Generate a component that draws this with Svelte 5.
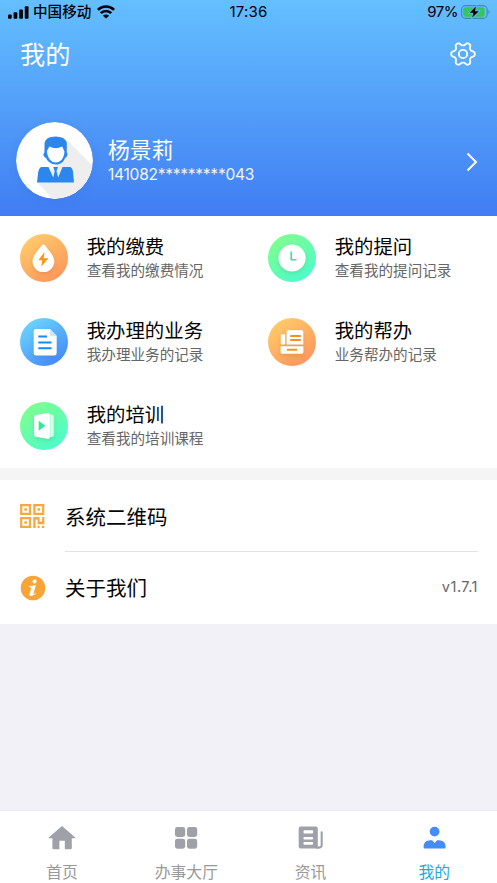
<script>
  const features = [
    { icon: 'pay', title: '我的缴费', sub: '查看我的缴费情况' },
    { icon: 'ask', title: '我的提问', sub: '查看我的提问记录' },
    { icon: 'doc', title: '我办理的业务', sub: '我办理业务的记录' },
    { icon: 'help', title: '我的帮办', sub: '业务帮办的记录' },
    { icon: 'train', title: '我的培训', sub: '查看我的培训课程' }
  ];
  const tabs = [
    { icon: 'home', label: '首页' },
    { icon: 'grid', label: '办事大厅' },
    { icon: 'news', label: '资讯' },
    { icon: 'me', label: '我的', active: true }
  ];
  const gear = Array.from({ length: 72 }, (_, i) => {
    const a = (i * Math.PI) / 36;
    const r = 10.2 + 1.75 * Math.tanh(1.6 * Math.cos(6 * a));
    return `${(13 + r * Math.cos(a)).toFixed(2)},${(13 + r * Math.sin(a)).toFixed(2)}`;
  }).join(' ');
</script>

<div class="screen">
  <header>
    <div class="status">
      <div class="side">
        <svg class="signal" width="21" height="13" viewBox="0 0 21 13"><rect x="0" y="8.5" width="3.7" height="4.3" rx="1"/><rect x="5.6" y="6.3" width="3.7" height="6.5" rx="1"/><rect x="11.2" y="3.5" width="3.7" height="9.3" rx="1"/><rect x="16.8" y="0.3" width="3.7" height="12.5" rx="1"/></svg>
        <span class="carrier">中国移动</span>
        <svg width="18" height="14" viewBox="0 0 18 14" fill="none" stroke="#000" stroke-width="2.6"><path d="M.9 4.9A11.4 11.4 0 0 1 17.1 4.9M3.8 8.2A7.2 7.2 0 0 1 14.2 8.2"/><path d="M9 13.6L5.9 10.7A4.4 4.4 0 0 1 12.1 10.7Z" fill="#000" stroke="none"/></svg>
      </div>
      <time>17:36</time>
      <div class="side right">
        <span>97%</span>
        <svg width="30" height="14" viewBox="0 0 30 14"><rect x=".6" y=".6" width="25.6" height="12.8" rx="4" fill="none" stroke="#4488b5" stroke-width="1.1"/><rect x="2.2" y="2.2" width="21.4" height="9.6" rx="2.5" fill="#34c759"/><path d="M27.5 4.6q2.1 2.3 0 4.8z" fill="#4488b5"/><path d="M14.9 1.6L8.7 7.8H12.4L11.3 12.6L17.7 6.3H13.9z" fill="#000" stroke="#5bb5fa" stroke-width="2" paint-order="stroke"/></svg>
      </div>
    </div>
    <div class="titlebar">
      <h1>我的</h1>
      <svg width="26" height="26" viewBox="0 0 26 26" fill="none" stroke="#fff" stroke-width="1.8" stroke-linejoin="round"><polygon points={gear}/><circle cx="13" cy="13" r="4.2"/></svg>
    </div>
    <div class="profile">
      <svg class="avatar" width="77" height="77" viewBox="0 0 77 77">
        <defs><clipPath id="face"><circle cx="38.5" cy="38.5" r="38.5"/></clipPath></defs>
        <circle cx="38.5" cy="38.5" r="38.5" fill="#fff"/>
        <path clip-path="url(#face)" d="M51 18L84 51V84H43L21 60L40 44Z" fill="#eee"/>
        <path fill="#2b86ee" d="M28.6 20.5Q30 14.5 39.5 14.5T50.8 20.5V30.5C52.6 32 50.6 35.5 49 36.2C47.5 40 44.5 42.5 39.8 42.5S31.5 39.5 30 36C27.5 35 26.6 32 28.4 30.5Z"/>
        <path fill="#fff" d="M33.5 24.5Q39.5 28 46.2 24.5L48.5 29.5C48 36.5 44.5 40.5 39.8 40.5S31.5 36 30.8 29Z"/>
        <path fill="#2b86ee" d="M25 45H32.5L37.2 55.5L38.7 49L37.2 45H42L40.5 49L42.2 55.5L46.5 45H54Q56.4 45.5 57 50L58 60.5H21L22.2 50Q23 46 25 45Z"/>
      </svg>
      <div class="person"><b>杨景莉</b><span>141082*********043</span></div>
      <svg class="chevron" width="12" height="20" viewBox="0 0 12 20" fill="none" stroke="#fff" stroke-width="2"><path d="M1.5 1.5L10 10L1.5 18.5"/></svg>
    </div>
  </header>

  <section class="features">
    {#each features as f}
      <div class="feature">
        <span class="disc {f.icon}">
          <svg width="48" height="48" viewBox="0 0 48 48">
            {#if f.icon === 'pay'}
              <path fill="#fff" d="M21.9 11.3Q23.5 9.5 24.9 11.3C28.5 16 34.3 22 34.3 27.2A10.9 10.9 0 0 1 12.5 27.2C12.5 22 18.3 16 21.9 11.3Z"/><path fill="#ff9417" d="M24.5 18L18.3 26.3H22.2L21.3 32.8L28.3 24.2H23.8Z"/>
            {:else if f.icon === 'ask'}
              <circle cx="24" cy="24" r="13.6" fill="#fff"/><path d="M23.2 17.5V25.8H28.3" fill="none" stroke="#2cec9c" stroke-width="1.6"/>
            {:else if f.icon === 'doc'}
              <path fill="#fff" d="M16 11H30L36.7 18V35Q36.7 37.5 34.3 37.5H16.2Q13.7 37.5 13.7 35V13.4Q13.7 11 16 11Z"/><path fill="#cfe4ff" d="M30 11L36.7 18H31.5Q30 18 30 16.5Z"/><path d="M18.3 18.5H27M18.3 24.5H31.5M18.3 30.3H31.5" stroke="#1788ff" stroke-width="2"/>
            {:else if f.icon === 'help'}
              <g fill="#fff"><rect x="12.8" y="16.2" width="4.4" height="10.3" rx="1.3"/><path d="M20.3 12.3H33.8Q35.3 12.3 35.3 13.8V26.5H18.6V14Q18.6 12.3 20.3 12.3ZM12.6 28.3H35.4V34Q35.4 35.7 33.7 35.7H14.3Q12.6 35.7 12.6 34Z"/></g><path d="M22.2 18H32.8M22.2 22H32.8M19 31.7H29" stroke="#fb9218" stroke-width="1.9"/>
            {:else}
              <path fill="#a8ffd8" d="M27 12.5H32Q34.2 12.5 34.2 15V32.5Q34.2 35 32 35H27Z"/><path fill="#fff" d="M15.7 13.1L27.4 11Q29.8 10.6 29.8 12.9V35Q29.8 37.3 27.4 36.8L15.7 34.7Q14 34.4 14 32.7V15Q14 13.4 15.7 13.1Z"/><path fill="#fff" d="M30.8 12.8H32Q32.5 13 32.5 15V32.8Q32.5 34.6 30.8 34.8Z"/><path fill="#29ed98" d="M18.7 18.8L25.3 23.8L18.7 28.8Z"/>
            {/if}
          </svg>
        </span>
        <div class="copy"><h2>{f.title}</h2><p>{f.sub}</p></div>
      </div>
    {/each}
  </section>

  <section class="list">
    <div class="item">
      <svg width="26" height="26" viewBox="0 0 26 26" fill="none" stroke="#f8a83c" stroke-width="2.2"><path d="M1.2 2.1H10V10.9H1.2ZM14.4 2.1H23.2V10.9H14.4ZM1.2 15.1H10V23.9H1.2Z"/><path fill="#f8a83c" stroke="none" d="M4.3 5.2h2.6v2.6H4.3zM17.5 5.2h2.6v2.6h-2.6zM4.3 18.2h2.6v2.6H4.3zM13.3 14h6.2v4.6h2.7V14h2.2v7.2h-6.8v-4.6h-2V25h-2.3zM17.5 22.8h2.2V25h-2.2zM22 22.8h2.3V25H22z"/></svg>
      <div class="line"><span>系统二维码</span></div>
    </div>
    <div class="item">
      <svg width="26" height="26" viewBox="0 0 26 26"><circle cx="13" cy="13" r="12.3" fill="#f8a538"/><g fill="#fff"><ellipse cx="14.6" cy="6.5" rx="2.1" ry="1.9" transform="rotate(-25 14.6 6.5)"/><path d="M9.3 11.1Q12.5 11.1 16 10L13.5 18.4Q13.3 19.5 14.2 19L15.6 17.7L16.1 18.3Q13.8 21 11.2 21.1Q9 20.9 9.6 18.7L11.2 13.2Q11.3 12.3 10.5 12.3L9.1 12.2Z"/></g></svg>
      <div class="line"><span>关于我们</span><small>v1.7.1</small></div>
    </div>
  </section>

  <nav>
    {#each tabs as t}
      <div class="tab" class:active={t.active}>
        <svg width="28" height="26" viewBox="0 0 28 26" fill="currentColor">
          {#if t.icon === 'home'}
            <path d="M14 1.3Q14.6 1.3 15.2 1.9L27.2 12.5Q27.6 13.2 26.8 13.2H23.8V23Q23.8 24.2 22.6 24.2H16.8V15.8H11.4V24.2H5.6Q4.4 24.2 4.4 23V13.2H1.2Q.4 13.2.8 12.5L12.8 1.9Q13.4 1.3 14 1.3Z"/>
          {:else if t.icon === 'grid'}
            <rect x="3" y="2" width="10.2" height="10" rx="2.4"/><rect x="15" y="2" width="10.2" height="10" rx="2.4"/><rect x="3" y="13.7" width="10.2" height="10" rx="2.4"/><rect x="15" y="13.7" width="10.2" height="10" rx="2.4"/>
          {:else if t.icon === 'news'}
            <path fill-rule="evenodd" d="M3.7 1.6H18.8Q20.8 1.6 20.8 3.6V23.6H4.2Q1.7 23.6 1.7 21V3.6Q1.7 1.6 3.7 1.6ZM7.5 5.3Q6.5 5.3 6.5 6.3V7.6Q6.5 8.6 7.5 8.6H15.2Q16.2 8.6 16.2 7.6V6.3Q16.2 5.3 15.2 5.3ZM7.5 12.1Q6.4 12.1 6.4 13.3T7.5 14.5H15.1Q16.2 14.5 16.2 13.3T15.1 12.1ZM7.5 17.1Q6.4 17.1 6.4 18.4T7.5 19.7H15.1Q16.2 19.7 16.2 18.4T15.1 17.1Z"/><path fill="none" stroke="currentColor" stroke-width="2.1" stroke-linecap="round" d="M24.7 7.2V20.2Q24.7 22.5 21.2 22.6H19.8"/>
          {:else}
            <circle cx="13.6" cy="6.6" r="4.9"/><path d="M9.4 15.3H11.1L13.6 17.9L16.1 15.3H17.8C22.1 15.3 24.6 18.2 24.6 21.5V22.6Q24.6 23.6 23.4 23.6H3.8Q2.6 23.6 2.6 22.6V21.5C2.6 18.2 5.1 15.3 9.4 15.3Z"/>
          {/if}
        </svg>
        <span>{t.label}</span>
      </div>
    {/each}
  </nav>
</div>

<style>
  :global(body) { background: #f2f1f7; }
  .screen { width: 497px; height: 883px; display: flex; flex-direction: column; overflow: hidden; background: #f2f1f7; color: #050505; font-family: Inter, "Noto Sans CJK SC", sans-serif; }
  svg { display: block; flex: none; }
  h1, h2, p { margin: 0; font-weight: 400; }
  header { height: 216px; background: linear-gradient(#64bfff, #407df3); color: #fff; display: flex; flex-direction: column; }
  .status { height: 24px; display: flex; align-items: center; padding: 0 6px 0 8px; color: #000; font-size: 15px; line-height: 24px; }
  .status time { letter-spacing: .2px; margin-right: 2px; }
  .side { flex: 1; display: flex; align-items: center; }
  .signal { margin-right: 4px; }
  .carrier { font-size: 14.6px; font-weight: 500; margin-right: 6px; }
  .right { justify-content: flex-end; gap: 3px; }
  .right span { letter-spacing: -.5px; }
  .titlebar { height: 60px; display: flex; align-items: center; justify-content: space-between; padding: 0 21px 0 20px; }
  h1 { font-size: 25.2px; line-height: 60px; padding-top: 2px; }
  .profile { margin-top: 38px; display: flex; align-items: center; padding: 0 19px 0 16px; }
  .avatar { border-radius: 50%; box-shadow: 0 2px 7px #326ee044; }
  .person { flex: 1; margin-left: 15px; display: flex; flex-direction: column; }
  .person b { font-size: 21.8px; line-height: 27px; font-weight: 400; }
  .person span { font-size: 15.6px; line-height: 21px; letter-spacing: -.29px; color: #f0f6ff; }
  .chevron { margin-top: 2px; }
  .features { height: 252px; display: grid; grid-template-columns: 248.5px 248.5px; grid-auto-rows: 84px; background: #fff; border-bottom: 12px solid #f5f5f5; }
  .feature { display: flex; align-items: center; padding-left: 19.5px; gap: 19.2px; }
  .feature:nth-child(even) { padding-left: 19px; }
  .disc { width: 48px; height: 48px; border-radius: 50%; }
  .disc svg { filter: drop-shadow(0 2px 2px #00000018); }
  .pay, .help { background: linear-gradient(145deg, #ffd36b, #ff8d5a); }
  .ask, .train { background: linear-gradient(145deg, #85ff85, #45fbd4); }
  .doc { background: linear-gradient(145deg, #70dfff, #3f80fb); }
  h2 { font-size: 19.4px; line-height: 26px; }
  .copy p { font-size: 14.6px; line-height: 22px; color: #666; }
  .list { background: #fff; height: 144px; }
  .item { height: 72px; display: flex; align-items: center; padding: 0 19px 0 20px; }
  .line { flex: 1; height: 72px; box-sizing: border-box; margin-left: 19px; display: flex; align-items: center; justify-content: space-between; font-size: 20.5px; }
  .item:first-child .line { border-bottom: 1px solid #e3e3e5; }
  .item:last-child .line { padding-bottom: 2px; }
  .line small { font-size: 14.6px; letter-spacing: .45px; color: #666; }
  nav { height: 72px; margin-top: auto; display: flex; background: #fff; border-top: 1px solid #eceaf0; }
  .tab { flex: 1; display: flex; flex-direction: column; align-items: center; padding-top: 14px; color: #a0a1a8; }
  .tab span { font-size: 15.8px; line-height: 22px; margin-top: 11px; color: #999; }
  .tab.active { color: #468cf6; }
  .tab.active span { color: #25a8dc; margin-right: 1px; }
</style>
